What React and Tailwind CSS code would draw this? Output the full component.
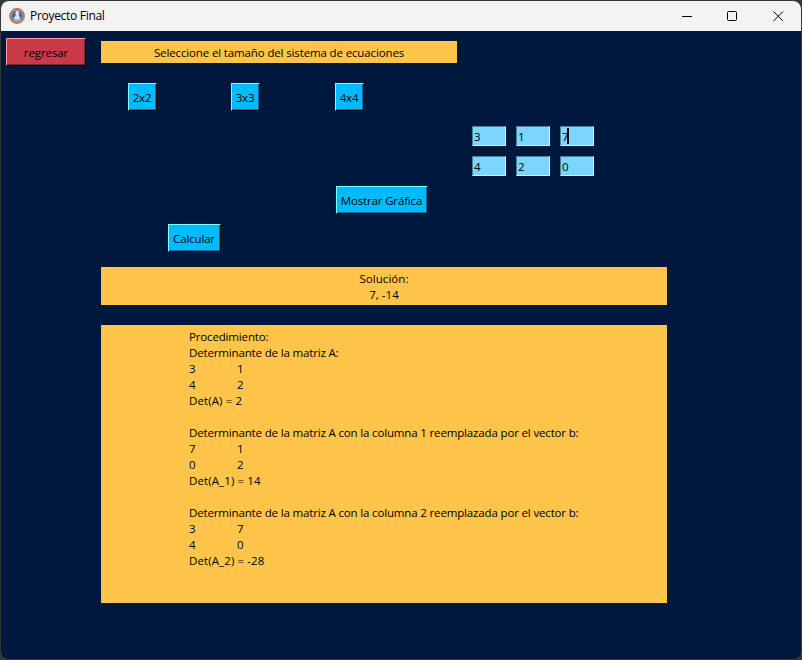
import React from "react";

function Raised({ className, children }) {
  return (
    <button
      className={`flex items-center justify-center border border-r-black border-b-black whitespace-nowrap ${className}`}
    >
      {children}
    </button>
  );
}

function SizeButton({ className, children }) {
  return (
    <Raised
      className={`h-7 border-t-[#7fffff] border-l-[#7fffff] bg-[#00bbff] pt-px pr-px shadow-[inset_-1px_-1px_0_#00729c] ${className}`}
    >
      {children}
    </Raised>
  );
}

function Entry({ value, focused }) {
  return (
    <div className="flex h-5 w-[34px] items-center border border-t-[#4b8099] border-r-[#b4ffff] border-b-[#b4ffff] border-l-[#4b8099] bg-[#7bd6ff] pt-px pl-px">
      <span className="w-[5px]">{value}</span>
      {focused && <span className="-mt-px h-4 w-0.5 bg-black" />}
    </div>
  );
}

function AppIcon() {
  return (
    <svg className="h-4 w-4" viewBox="0 0 16 16">
      <circle cx="8" cy="8" r="7.9" fill="#cf5f4c" />
      <circle cx="8" cy="8" r="7" fill="none" stroke="#dc9a8c" strokeWidth="0.8" strokeDasharray="1 1.2" />
      <circle cx="8" cy="8" r="5.9" fill="#b9cdd8" />
      <circle cx="8" cy="8" r="5.5" fill="#2f78aa" />
      <path d="M7 3.2 9.300 3l.8 2.200-.4 2 1.200 2.600.7 1.600H4.600l.6-2 1.700-2L6.400 5.200Z" fill="#dbe8ef" />
      <path d="M4.200 11.500h7.600l-1.600 1.600H5.800Z" fill="#91bdd5" />
    </svg>
  );
}

function TitleBar() {
  return (
    <header className="flex h-[30px] items-center bg-[#f3f3f3] pl-2">
      <AppIcon />
      <h1 className="ml-[5px] flex-1 text-[12px] tracking-[-0.3px]">Proyecto Final</h1>
      <svg className="mr-4 h-3 w-[103px] text-black" viewBox="0 0 103 12" fill="none" stroke="currentColor">
        <path d="M0 6.500h10" />
        <rect x="45.500" y="1.500" width="9" height="9" rx="1" />
        <path d="m91.500 1.500 9.500 9.500m0-9.500-9.500 9.500" />
      </svg>
    </header>
  );
}

const steps = [
  ["Determinante de la matriz A:", ["3", "1"], ["4", "2"], "Det(A) = 2"],
  ["Determinante de la matriz A con la columna 1 reemplazada por el vector b:", ["7", "1"], ["0", "2"], "Det(A_1) = 14"],
  ["Determinante de la matriz A con la columna 2 reemplazada por el vector b:", ["3", "7"], ["4", "0"], "Det(A_2) = -28"],
];

function Step({ step }) {
  const [title, first, second, result] = step;
  return (
    <section className="mb-4">
      <p>{title}</p>
      {[first, second].map((row, i) => (
        <div key={i} className="flex">
          <span className="w-12">{row[0]}</span>
          <span>{row[1]}</span>
        </div>
      ))}
      <p className="tracking-[0.1px]">{result}</p>
    </section>
  );
}

export default function App() {
  return (
    <div className="h-[660px] w-[802px] overflow-hidden bg-[#363636] p-px font-['Open_Sans',sans-serif] text-[11.5px] leading-4 tracking-[-0.155px] text-black">
      <div className="h-[658px] w-[800px] overflow-hidden rounded-lg bg-[#00183d]">
        <TitleBar />
        <main className="pl-[5px]">
          <div className="flex h-[52px] pt-[7px]">
            <Raised className="h-7 w-20 border-t-[#ff9ba4] border-l-[#ff9ba4] bg-[#c83a48] pt-px tracking-[-0.1px] shadow-[inset_-1px_-1px_0_#79232c]">
              regresar
            </Raised>
            <p className="mt-[3px] ml-[15px] flex h-[22px] w-[356px] items-center justify-center bg-[#ffc54a] pt-px tracking-[-0.135px] whitespace-nowrap">
              Seleccione el tamaño del sistema de ecuaciones
            </p>
          </div>
          <div className="flex h-[43px] pl-[122px]">
            <SizeButton className="w-[29px]">2x2</SizeButton>
            <SizeButton className="ml-[74px] w-[29px]">3x3</SizeButton>
            <SizeButton className="ml-[75px] w-[29px]">4x4</SizeButton>
          </div>
          <div className="ml-[466px] grid w-[122px] grid-cols-3 gap-2.5">
            <Entry value="3" />
            <Entry value="1" />
            <Entry value="7" focused />
            <Entry value="4" />
            <Entry value="2" />
            <Entry value="0" />
          </div>
          <SizeButton className="mt-2.5 ml-[330px] w-[92px]">Mostrar Gráfica</SizeButton>
          <SizeButton className="mt-2.5 ml-[162px] w-[53px]">Calcular</SizeButton>
          <div className="mt-[15px] ml-[95px] h-[38px] w-[566px] bg-[#ffc54a] pt-1 text-center tracking-[0.05px]">
            <p>Solución:</p>
            <p>7, -14</p>
          </div>
          <div className="mt-5 ml-[95px] h-[278px] w-[566px] bg-[#ffc54a] pt-1 pl-[88px] whitespace-nowrap">
            <p>Procedimiento:</p>
            {steps.map((step) => (
              <Step key={step[0]} step={step} />
            ))}
          </div>
        </main>
      </div>
    </div>
  );
}
